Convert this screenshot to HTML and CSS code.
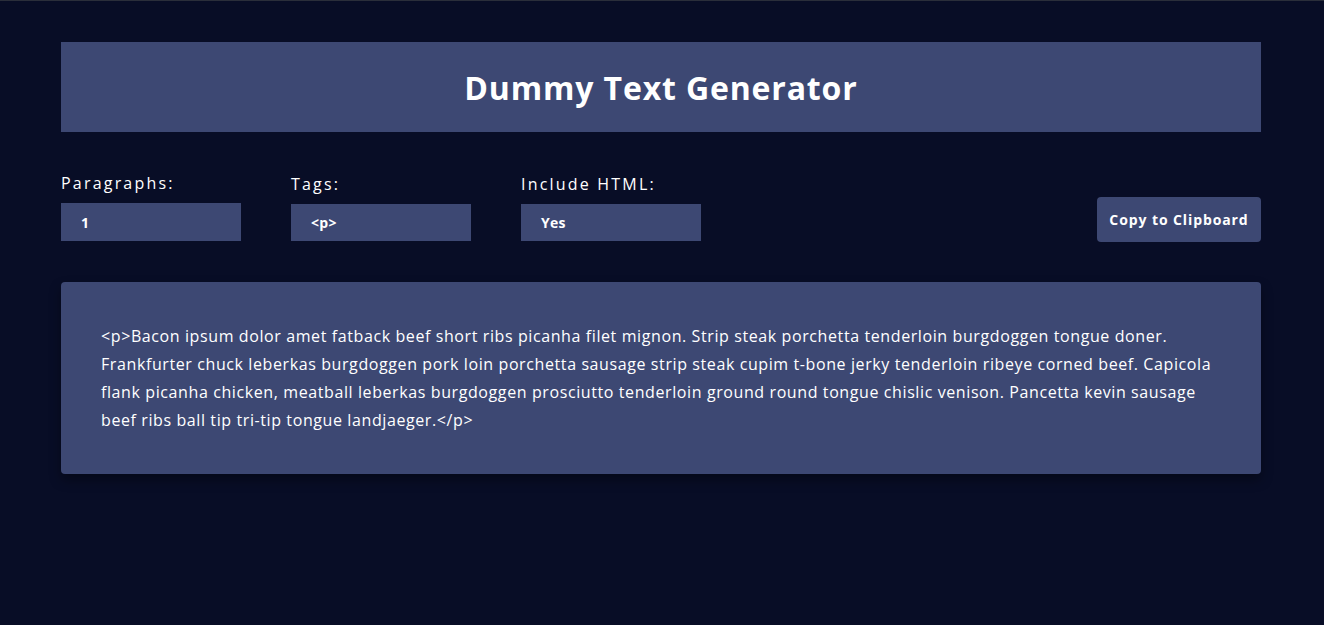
FILE: index.html
```html
<!DOCTYPE html>
<html lang="en">
<head>
<meta charset="utf-8">
<title>Dummy Text Generator</title>
<link rel="stylesheet" href="styles.css">
</head>
<body>
<div class="container">
  <header class="header">
    <h1 class="title">Dummy Text Generator</h1>
  </header>
  <section class="controls">
    <div class="field">
      <label class="label">Paragraphs:</label>
      <div class="input input-first">1</div>
    </div>
    <div class="field">
      <label class="label">Tags:</label>
      <div class="input">&lt;p&gt;</div>
    </div>
    <div class="field">
      <label class="label">Include HTML:</label>
      <div class="input">Yes</div>
    </div>
    <button class="copy-btn">Copy to Clipboard</button>
  </section>
  <section class="output">
    <p class="output-text">&lt;p&gt;Bacon ipsum dolor amet fatback beef short ribs picanha filet mignon. Strip steak porchetta tenderloin burgdoggen tongue doner. Frankfurter chuck leberkas burgdoggen pork loin porchetta sausage strip steak cupim t-bone jerky tenderloin ribeye corned beef. Capicola flank picanha chicken, meatball leberkas burgdoggen prosciutto tenderloin ground round tongue chislic venison. Pancetta kevin sausage beef ribs ball tip tri-tip tongue landjaeger.&lt;/p&gt;</p>
  </section>
</div>
</body>
</html>
```
FILE: styles.css
```css
* { box-sizing: border-box; }
html, body { margin: 0; padding: 0; }
body {
  background: #080d26;
  border-top: 1px solid #2a2e3a;
  font-family: "Open Sans", "Liberation Sans", sans-serif;
  color: #ffffff;
  min-height: 625px;
}
.container {
  width: 1200px;
  margin: 0 61px;
  padding-top: 41px;
}
.header {
  background: #3d4873;
  height: 90px;
  display: flex;
  align-items: center;
  justify-content: center;
}
.title {
  margin: 0;
  font-size: 32px;
  font-weight: 700;
  letter-spacing: 0.85px;
}
.controls {
  display: flex;
  align-items: flex-end;
  gap: 50px;
  margin-top: 41px;
}
.field {
  display: flex;
  flex-direction: column;
  width: 180px;
}
.label {
  font-size: 16px;
  letter-spacing: 2.2px;
  line-height: 20px;
  margin-bottom: 10px;
}
.input {
  background: #3d4873;
  height: 37px;
  padding-left: 20px;
  display: flex;
  align-items: center;
  font-size: 14px;
  font-weight: 700;
  letter-spacing: 0.3px;
}
.input-first { height: 38px; }
.copy-btn {
  margin-left: auto;
  margin-bottom: -1px;
  background: #3d4873;
  color: #ffffff;
  border: none;
  border-radius: 4px;
  width: 164px;
  height: 45px;
  padding: 0;
  font-family: inherit;
  font-size: 14px;
  font-weight: 700;
  letter-spacing: 0.9px;
  align-self: flex-end;
}
.output {
  margin-top: 41px;
  background: #3d4873;
  border-radius: 4px;
  padding: 40px;
  box-shadow: 0 6px 12px rgba(0, 0, 0, 0.35);
}
.output-text {
  margin: 0;
  font-size: 16px;
  line-height: 28px;
  letter-spacing: 0.6px;
}
```
